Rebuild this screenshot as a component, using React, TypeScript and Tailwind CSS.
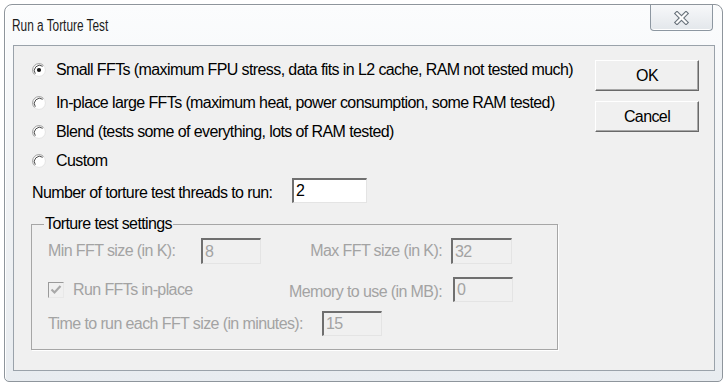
import React from 'react';

function Radio({ checked }: { checked?: boolean }) {
  return (
    <svg width="14" height="14" viewBox="0 0 14 14" className="shrink-0">
      <circle cx="7" cy="7" r="6.4" fill="#fff" stroke="#e4e4e4" />
      <path d="M2.47 11.53 A6.4 6.4 0 0 1 11.53 2.47" fill="none" stroke="#a3a3a3" />
      <path d="M3.3 10.7 A5.3 5.3 0 0 1 10.7 3.3" fill="none" stroke="#4d4d4d" />
      {checked && <circle cx="7" cy="7" r="2.1" fill="#111" />}
    </svg>
  );
}

function Field({ value, disabled, className }: { value: string; disabled?: boolean; className: string }) {
  return (
    <div
      className={`flex items-center border-t-2 border-l-2 border-r border-b border-t-[#6f6f6f] border-l-[#6f6f6f] border-r-[#e4e4e4] border-b-[#e4e4e4] pl-[2px] leading-none ${
        disabled ? 'bg-[#f0f0f0] text-[#a3a3a3]' : 'bg-white text-black'
      } ${className}`}
    >
      {value}
    </div>
  );
}

function Button({ label }: { label: string }) {
  return (
    <div className="flex h-[31px] w-[104px] items-center justify-center border border-t-white border-l-white border-r-[#696969] border-b-[#696969] bg-[#f0f0f0] text-black shadow-[inset_-1px_-1px_0_#a8a8a8]">
      {label}
    </div>
  );
}

export default function App() {
  const options = [
    { text: 'Small FFTs (maximum FPU stress, data fits in L2 cache, RAM not tested much)', checked: true, mt: 'mt-[12px]' },
    { text: 'In-place large FFTs (maximum heat, power consumption, some RAM tested)', checked: false, mt: 'mt-[9px]' },
    { text: 'Blend (tests some of everything, lots of RAM tested)', checked: false, mt: 'mt-[5px]' },
    { text: 'Custom', checked: false, mt: 'mt-[5px]' },
  ];

  return (
    <div className="h-[384px] w-[727px] overflow-hidden bg-white pl-[4px] pt-[4px] font-['Liberation_Sans',Arial,sans-serif] text-[16px] tracking-[-0.6px]">
      <div className="flex h-[378px] w-[719px] flex-col rounded-t-[8px] rounded-b-[5px] border border-[#8e959c] bg-gradient-to-b from-[#fbfcfd] via-[#f1f3f5] to-[#e8ecf0] shadow-[inset_1px_1px_0_#fff]">
        {/* title bar */}
        <div className="flex h-[40px] items-start justify-between pl-[7px] pr-[9px]">
          <div className="mt-[13px] origin-left scale-x-[0.74] text-[16px] leading-none tracking-normal text-[#1c1c1c]">
            Run a Torture Test
          </div>
          <div className="flex h-[26px] w-[63px] items-center justify-center rounded-b-[4px] border border-t-0 border-[#8d97a1] bg-gradient-to-b from-[#f7f8fa] to-[#e3e7eb] shadow-[inset_0_-1px_0_#fff]">
            <svg width="17" height="14" viewBox="0 0 17 14">
              <path d="M4 2.5 L13 11.5 M13 2.5 L4 11.5" stroke="#6a737c" strokeWidth="4.4" strokeLinecap="square" />
              <path d="M4 2.5 L13 11.5 M13 2.5 L4 11.5" stroke="#fdfdfd" strokeWidth="2.2" strokeLinecap="square" />
            </svg>
          </div>
        </div>

        {/* client area */}
        <div className="mb-[10px] ml-[8px] mr-[7px] flex flex-1 border border-[#9aa2aa] bg-[#f0f0f0] pl-[18px] pr-[15px] text-black">
          <div className="flex flex-1 flex-col">
            {options.map((o) => (
              <div key={o.text} className={`flex h-[24px] items-center gap-[10px] ${o.mt}`}>
                <Radio checked={o.checked} />
                <span>{o.text}</span>
              </div>
            ))}
            <div className="mt-[5px] flex h-[25px] items-center">
              <span className="w-[260px] pt-[4px]">Number of torture test threads to run:</span>
              <Field value="2" className="h-[25px] w-[75px]" />
            </div>

            <fieldset className="-ml-[1px] mt-[12px] w-[527px] border border-[#a6a6a6] pb-[13px] pl-[16px] shadow-[1px_1px_0_#fff]">
              <legend className="-ml-[4px] px-[1px] leading-[18px] text-black">Torture test settings</legend>
              <div className="mt-[5px] flex h-[26px] items-center text-[#a3a3a3]">
                <span className="w-[153px]">Min FFT size (in K):</span>
                <Field value="8" disabled className="h-[26px] w-[60px]" />
                <span className="w-[181px] text-right">Max FFT size (in K):</span>
                <Field value="32" disabled className="ml-[9px] h-[26px] w-[61px]" />
              </div>
              <div className="mt-[13px] flex h-[25px] items-center text-[#a3a3a3]">
                <div className="flex w-[213px] items-center gap-[9px]">
                  <div className="flex h-[16px] w-[16px] items-center justify-center border border-t-[#9a9a9a] border-l-[#9a9a9a] border-r-[#e8e8e8] border-b-[#e8e8e8] bg-[#f0f0f0]">
                    <svg width="12" height="11" viewBox="0 0 12 11">
                      <path d="M1.5 5.5 L4.5 8.5 L10.5 2" fill="none" stroke="#a8a8a8" strokeWidth="2.2" />
                    </svg>
                  </div>
                  <span>Run FFTs in-place</span>
                </div>
                <span className="w-[181px] pt-[4px] text-right">Memory to use (in MB):</span>
                <Field value="0" disabled className="ml-[11px] h-[25px] w-[60px]" />
              </div>
              <div className="mt-[9px] flex h-[25px] items-center text-[#a3a3a3]">
                <span className="w-[274px]">Time to run each FFT size (in minutes):</span>
                <Field value="15" disabled className="h-[25px] w-[60px]" />
              </div>
            </fieldset>
          </div>

          <div className="flex w-[104px] shrink-0 flex-col gap-[10px] pt-[14px]">
            <Button label="OK" />
            <Button label="Cancel" />
          </div>
        </div>
      </div>
    </div>
  );
}
